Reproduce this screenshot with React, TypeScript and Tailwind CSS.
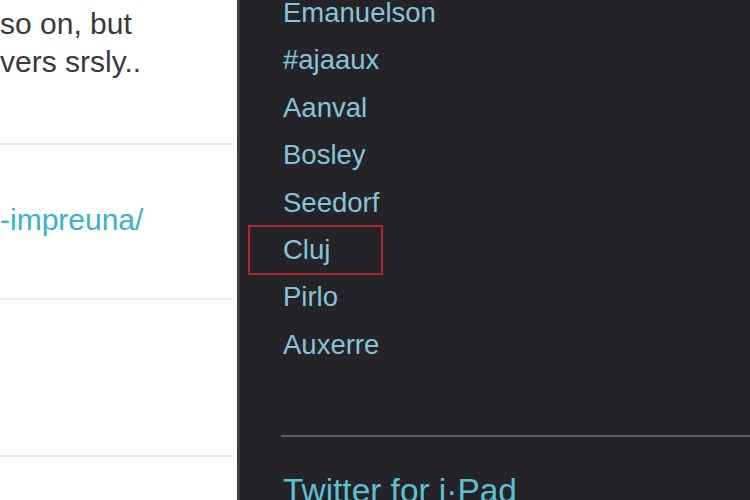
import React from 'react';

const trends = ['Emanuelson', '#ajaaux', 'Aanval', 'Bosley', 'Seedorf', 'Cluj', 'Pirlo', 'Auxerre'];

const App: React.FC = () => {
  return (
    <div className="flex w-[750px] h-[500px] overflow-hidden bg-white font-['Liberation_Sans',Arial,sans-serif]">
      {/* timeline column, cut off on the left */}
      <div className="w-[237px] shrink-0 overflow-hidden">
        <div className="pt-[5px] text-[30px] leading-[38px] text-[#3a3a3a] whitespace-nowrap">
          <p>so on, but</p>
          <p>vers srsly..</p>
        </div>
        <div className="mt-[62px] mr-[4px] h-[2px] bg-[#e9e9e9]" />
        <div className="pt-[56px] text-[30px] leading-[38px] text-[#3db2c9] whitespace-nowrap">
          <p>-impreuna/</p>
        </div>
        <div className="mt-[59px] mr-[4px] h-[2px] bg-[#ebebeb]" />
        <div className="mt-[155px] mr-[4px] h-[2px] bg-[#ebebeb]" />
      </div>

      <div className="w-[3px] shrink-0 bg-[#3c3b3f]" />

      {/* trends sidebar */}
      <div className="flex-1 bg-[#242327] pl-[43px]">
        <ul className="mt-[-11px] text-[27.5px] leading-[47.4px] text-[#88c4d6]">
          {trends.map((t) => (
            <li key={t} className="relative">
              {t === 'Cluj' && (
                <span className="absolute left-[-35px] top-[-1px] w-[135px] h-[50px] border-2 border-[#b3242d]" />
              )}
              {t}
            </li>
          ))}
        </ul>
        <div className="mt-[67px] ml-[-2px] h-[2px] bg-[#5f5f62]" />
        <p className="mt-[34px] text-[33.4px] leading-[40px] text-[#5ec0d3] whitespace-nowrap">Twitter for i·Pad</p>
      </div>
    </div>
  );
};

export default App;
